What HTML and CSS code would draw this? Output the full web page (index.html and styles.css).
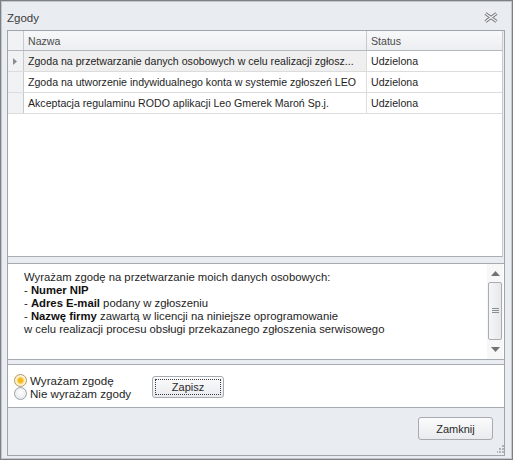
FILE: index.html
```html
<!DOCTYPE html>
<html lang="pl">
<head>
<meta charset="utf-8">
<title>Zgody</title>
<link rel="stylesheet" href="styles.css">
</head>
<body>
<div class="window">
  <div class="titlebar">
    <span class="title">Zgody</span>
    <svg class="close" width="14" height="11" viewBox="0 0 14 11">
      <path d="M1.5 1.5 L12.5 9.5 M12.5 1.5 L1.5 9.5" stroke="#74777b" stroke-width="3.4" fill="none"/>
      <path d="M1.5 1.5 L12.5 9.5 M12.5 1.5 L1.5 9.5" stroke="#f2f3f5" stroke-width="1.3" fill="none"/>
    </svg>
  </div>
  <div class="frame">
    <div class="grid">
      <div class="row header">
        <div class="ind"></div>
        <div class="cell name">Nazwa</div>
        <div class="cell status">Status</div>
      </div>
      <div class="row focused">
        <div class="ind"><svg width="4" height="7" viewBox="0 0 4 7"><path d="M0 0 L4 3.5 L0 7 Z" fill="#8a8d91"/></svg></div>
        <div class="cell name">Zgoda na przetwarzanie danych osobowych w celu realizacji zgłosz...</div>
        <div class="cell status">Udzielona</div>
      </div>
      <div class="row">
        <div class="ind"></div>
        <div class="cell name">Zgoda na utworzenie indywidualnego konta w systemie zgłoszeń LEO</div>
        <div class="cell status">Udzielona</div>
      </div>
      <div class="row">
        <div class="ind"></div>
        <div class="cell name">Akceptacja regulaminu RODO aplikacji Leo Gmerek Maroń Sp.j.</div>
        <div class="cell status">Udzielona</div>
      </div>
    </div>
    <div class="textpanel">
      <div class="text">
        <div>Wyrażam zgodę na przetwarzanie moich danych osobowych:</div>
        <div>- <b>Numer NIP</b></div>
        <div>- <b>Adres E-mail</b> podany w zgłoszeniu</div>
        <div>- <b>Nazwę firmy</b> zawartą w licencji na niniejsze oprogramowanie</div>
        <div>w celu realizacji procesu obsługi przekazanego zgłoszenia serwisowego</div>
      </div>
      <div class="scrollbar">
        <div class="sb-btn up"><svg width="9" height="5" viewBox="0 0 9 5"><path d="M0 5 L4.5 0 L9 5 Z" fill="#6f7378"/></svg></div>
        <div class="thumb"><svg width="7" height="6" viewBox="0 0 7 6"><path d="M0 0.5 H7 M0 2.5 H7 M0 4.5 H7" stroke="#8a8e93" stroke-width="1"/></svg></div>
        <div class="sb-btn down"><svg width="9" height="5" viewBox="0 0 9 5"><path d="M0 0 L4.5 5 L9 0 Z" fill="#6f7378"/></svg></div>
      </div>
    </div>
    <div class="radiopanel">
      <div class="radios">
        <label class="radio"><span class="dot checked"></span>Wyrażam zgodę</label>
        <label class="radio"><span class="dot"></span>Nie wyrażam zgody</label>
      </div>
      <button class="btn save"><span class="focusring">Zapisz</span></button>
    </div>
    <div class="footer">
      <button class="btn closebtn">Zamknij</button>
      <svg class="grip" width="7" height="8" viewBox="0 0 7 8">
        <rect x="5" y="0" width="2" height="2" fill="#b0b4b8"/>
        <rect x="5" y="3" width="2" height="2" fill="#b0b4b8"/>
        <rect x="2" y="3" width="2" height="2" fill="#b0b4b8"/>
        <rect x="5" y="6" width="2" height="2" fill="#b0b4b8"/>
        <rect x="2" y="6" width="2" height="2" fill="#b0b4b8"/>
        <rect x="-1" y="6" width="2" height="2" fill="#b0b4b8"/>
      </svg>
    </div>
  </div>
</div>
</body>
</html>
```
FILE: styles.css
```css
html, body {
  margin: 0;
  padding: 0;
  background: #ffffff;
}

.window {
  width: 513px;
  height: 460px;
  box-sizing: border-box;
  border: 1px solid #7d8185;
  box-shadow: inset 0 0 0 1px #c3c7cc;
  background: #e9ecf0;
  display: flex;
  flex-direction: column;
  font-family: "Liberation Sans", Arial, sans-serif;
  font-size: 10.6px;
  color: #1e1e1e;
}

.titlebar {
  height: 29px;
  box-sizing: border-box;
  padding: 5px 14px 0 6px;
  display: flex;
  align-items: center;
  justify-content: space-between;
  flex: none;
}

.title {
  font-size: 11.5px;
  color: #3b3b3b;
}

.close {
  display: block;
  margin-top: -1px;
}

.frame {
  margin: 0 7px 0 6px;
  height: 426px;
  box-sizing: border-box;
  border: 1px solid #9fa5ab;
  display: flex;
  flex-direction: column;
  flex: none;
}

/* grid */
.grid {
  height: 226px;
  box-sizing: border-box;
  background: #ffffff;
  border-bottom: 1px solid #a9aeb4;
  flex: none;
  margin-right: 1px;
  border-right: 1px solid #c9cdd2;
}

.row {
  display: flex;
  height: 21px;
  box-sizing: border-box;
  border-bottom: 1px solid #dcdcdc;
}

.row.header {
  height: 20px;
  border-bottom: 1px solid #b5b9be;
  background: linear-gradient(#f8f8f9, #eceef1);
  color: #4a4a4a;
}

.ind {
  width: 16px;
  flex: none;
  box-sizing: border-box;
  border-right: 1px solid #c6c9cd;
  background: #f1f2f4;
  display: flex;
  align-items: center;
  justify-content: center;
}

.ind svg {
  display: block;
  margin-left: -1px;
}

.cell {
  display: flex;
  align-items: center;
  box-sizing: border-box;
  white-space: nowrap;
  overflow: hidden;
}

.cell.name {
  width: 343px;
  flex: none;
  padding-left: 4px;
  border-right: 1px solid #dcdcdc;
}

.header .cell.name {
  border-right-color: #c6c9cd;
}

.cell.status {
  flex: 1;
  padding-left: 4px;
}

.row.focused .cell.name {
  background: #efefef;
}

/* text panel */
.textpanel {
  margin-top: 6px;
  height: 97px;
  box-sizing: border-box;
  border-top: 1px solid #a6abb1;
  border-bottom: 1px solid #a6abb1;
  background: #ffffff;
  display: flex;
  flex: none;
}

.text {
  flex: 1;
  padding: 7px 0 0 16px;
  font-size: 11.3px;
  line-height: 13px;
  color: #1e1e1e;
}

.text b {
  color: #111111;
}

.scrollbar {
  width: 16px;
  margin-right: 1px;
  flex: none;
  background: #f7f7f8;
  display: flex;
  flex-direction: column;
}

.sb-btn {
  display: flex;
  align-items: center;
  justify-content: center;
}

.sb-btn.up {
  height: 18px;
}

.sb-btn.down {
  flex: 1;
}

.sb-btn svg {
  display: block;
}

.thumb {
  height: 58px;
  margin: 0 1px;
  box-sizing: border-box;
  border: 1px solid #a9adb2;
  border-radius: 2px;
  background: linear-gradient(90deg, #f6f6f7, #e6e8eb);
  display: flex;
  align-items: center;
  justify-content: center;
}

.thumb svg {
  display: block;
}

/* radio panel */
.radiopanel {
  margin-top: 4px;
  height: 44px;
  box-sizing: border-box;
  border-top: 1px solid #a6abb1;
  border-bottom: 1px solid #a6abb1;
  background: #ffffff;
  display: flex;
  align-items: flex-start;
  flex: none;
}

.radios {
  width: 138px;
  padding: 9px 0 0 6px;
  display: flex;
  flex-direction: column;
  flex: none;
}

.radio {
  height: 13px;
  display: flex;
  align-items: center;
  font-size: 11.6px;
  color: #1e1e1e;
  white-space: nowrap;
}

.dot {
  width: 13px;
  height: 13px;
  box-sizing: border-box;
  border-radius: 50%;
  border: 1px solid #9ea2a7;
  background: radial-gradient(circle at 50% 40%, #ffffff 0, #e6e8eb 80%);
  margin-right: 3px;
  flex: none;
}

.dot.checked {
  border-color: #b49a5a;
  background: radial-gradient(circle, #f4b400 0, #f8c030 2.5px, #fbe3a0 3.6px, #fdf3d8 4.5px, #f3f3f3 6px);
}

.btn {
  font-family: "Liberation Sans", Arial, sans-serif;
  font-size: 11px;
  color: #2a2a2a;
  box-sizing: border-box;
  border: 1px solid #a7abb0;
  border-radius: 3px;
  background: linear-gradient(#fbfbfc, #e9ebee);
  padding: 0;
  margin: 0;
}

.save {
  width: 72px;
  height: 22px;
  margin-top: 11px;
  padding: 2px;
  display: flex;
}

.focusring {
  flex: 1;
  border: 1px dotted #3a3a3a;
  display: flex;
  align-items: center;
  justify-content: center;
}

/* footer */
.footer {
  flex: 1;
  display: flex;
  justify-content: flex-end;
  align-items: flex-start;
  padding-top: 9px;
}

.closebtn {
  width: 75px;
  height: 23px;
}

.grip {
  display: block;
  align-self: flex-end;
  margin: 0 0 2px 4px;
}
```
